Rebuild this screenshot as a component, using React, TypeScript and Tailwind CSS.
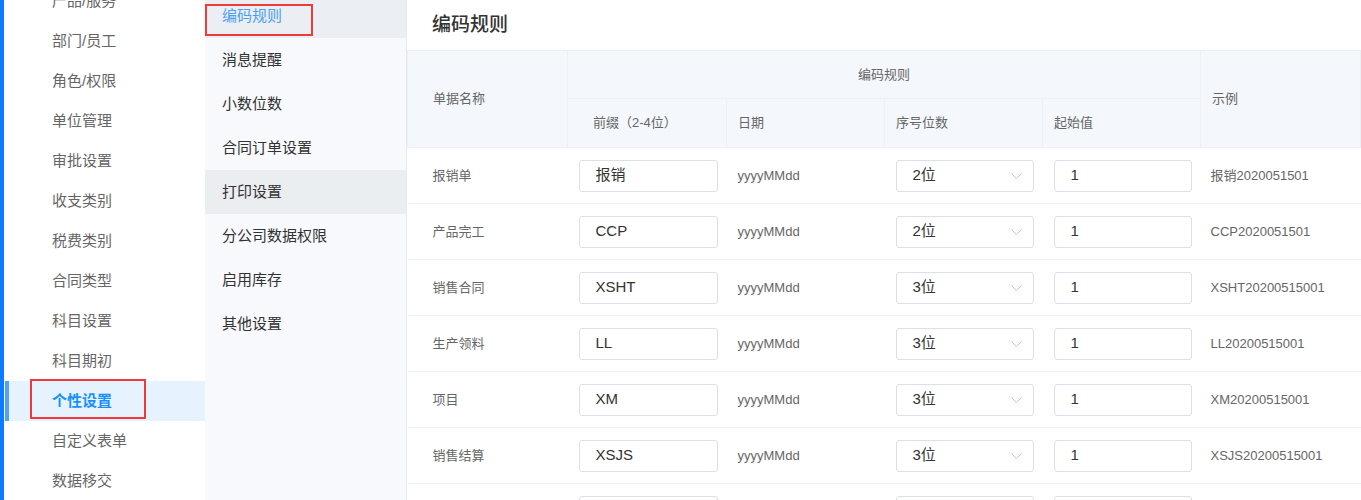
import React from "react";

const font = { fontFamily: '"Liberation Sans", "Noto Sans CJK SC", sans-serif' };

const leftMenu = [
  "产品/服务",
  "部门/员工",
  "角色/权限",
  "单位管理",
  "审批设置",
  "收支类别",
  "税费类别",
  "合同类型",
  "科目设置",
  "科目期初",
  "个性设置",
  "自定义表单",
  "数据移交",
];

const subMenu = ["编码规则", "消息提醒", "小数位数", "合同订单设置", "打印设置", "分公司数据权限", "启用库存", "其他设置"];

const rows = [
  { name: "报销单", prefix: "报销", digits: "2位", example: "报销2020051501" },
  { name: "产品完工", prefix: "CCP", digits: "2位", example: "CCP2020051501" },
  { name: "销售合同", prefix: "XSHT", digits: "3位", example: "XSHT20200515001" },
  { name: "生产领料", prefix: "LL", digits: "3位", example: "LL20200515001" },
  { name: "项目", prefix: "XM", digits: "3位", example: "XM20200515001" },
  { name: "销售结算", prefix: "XSJS", digits: "3位", example: "XSJS20200515001" },
  { name: "采购合同", prefix: "CGHT", digits: "3位", example: "CGHT20200515001" },
];

function Chevron() {
  return (
    <svg width="11" height="6" viewBox="0 0 11 6" fill="none">
      <path d="M0.5 0.5 L5.5 5.5 L10.5 0.5" stroke="#c0c4cc" strokeWidth="1" />
    </svg>
  );
}

export default function App() {
  return (
    <div className="flex h-[500px] w-[1361px] overflow-hidden bg-white" style={font}>
      {/* brand strip */}
      <div className="w-[4px] shrink-0 bg-[#0a7cff]" />

      {/* main menu */}
      <nav className="w-[201px] shrink-0 bg-white">
        <div className="-mt-[19px]">
          {leftMenu.map((item) =>
            item === "个性设置" ? (
              <div key={item} className="relative ml-[1px] flex h-[40px] items-center border-l-4 border-[#4ea2f7] bg-[#e6f3ff] pl-[43px]">
                <span className="text-[15px] font-bold text-[#1890ff]">{item}</span>
                <div className="absolute left-[21px] top-[-2px] h-[40px] w-[116px] border-2 border-[#f03a3a]" />
              </div>
            ) : (
              <div key={item} className="flex h-[40px] items-center pl-[48px] text-[15px] text-[#666]">
                {item}
              </div>
            )
          )}
        </div>
      </nav>

      {/* sub menu */}
      <aside className="w-[202px] shrink-0 border-r border-[#e6eaf0] bg-[#f7f9fc]">
        <div className="-mt-[6px]">
          {subMenu.map((item, i) => (
            <div
              key={item}
              className={`relative flex h-[44px] items-center pl-[17px] text-[15px] ${
                i === 0 ? "bg-[#ebeef2] text-[#4a9ff5]" : i === 4 ? "bg-[#ebeef1] text-[#333]" : "text-[#333]"
              }`}
            >
              {item}
              {i === 0 && <div className="absolute left-0 top-[10px] h-[32px] w-[108px] border-2 border-[#f03a3a]" />}
            </div>
          ))}
        </div>
      </aside>

      {/* content */}
      <main className="flex-1">
        <div className="flex h-[50px] items-center pl-[25px]">
          <h1 className="text-[19px] font-medium text-[#333]">编码规则</h1>
        </div>

        <table className="w-[953px] table-fixed border-collapse text-[13px] text-[#666]">
          <colgroup>
            <col className="w-[160px]" />
            <col className="w-[159px]" />
            <col className="w-[158px]" />
            <col className="w-[158px]" />
            <col className="w-[158px]" />
            <col className="w-[160px]" />
          </colgroup>
          <thead className="bg-[#f4f7fb]">
            <tr className="h-[48px]">
              <th rowSpan={2} className="border border-[#edf1f6] pl-[25px] text-left font-normal">
                单据名称
              </th>
              <th colSpan={4} className="border border-[#edf1f6] text-center font-normal">
                编码规则
              </th>
              <th rowSpan={2} className="border border-[#edf1f6] pl-[11px] text-left font-normal">
                示例
              </th>
            </tr>
            <tr className="h-[49px]">
              <th className="border border-[#edf1f6] pl-[25px] text-left font-normal">前缀（2-4位）</th>
              <th className="border border-[#edf1f6] pl-[11px] text-left font-normal">日期</th>
              <th className="border border-[#edf1f6] pl-[11px] text-left font-normal">序号位数</th>
              <th className="border border-[#edf1f6] pl-[11px] text-left font-normal">起始值</th>
            </tr>
          </thead>
          <tbody>
            {rows.map((r) => (
              <tr key={r.name} className="h-[56px] border-b border-[#ebeef5]">
                <td className="pl-[25px]">{r.name}</td>
                <td className="px-[11px]">
                  <div className="flex h-[32px] w-[139px] items-center rounded-[3px] border border-[#dcdfe6] pl-[16px] text-[15px] text-[#333]">
                    {r.prefix}
                  </div>
                </td>
                <td className="pl-[11px]">yyyyMMdd</td>
                <td className="px-[11px]">
                  <div className="flex h-[32px] w-[138px] items-center justify-between rounded-[3px] border border-[#dcdfe6] pl-[16px] pr-[11px] text-[15px] text-[#333]">
                    <span>{r.digits}</span>
                    <Chevron />
                  </div>
                </td>
                <td className="px-[11px]">
                  <div className="flex h-[32px] w-[138px] items-center rounded-[3px] border border-[#dcdfe6] pl-[16px] text-[15px] text-[#333]">
                    1
                  </div>
                </td>
                <td className="pl-[10px]">{r.example}</td>
              </tr>
            ))}
          </tbody>
        </table>
      </main>
    </div>
  );
}
